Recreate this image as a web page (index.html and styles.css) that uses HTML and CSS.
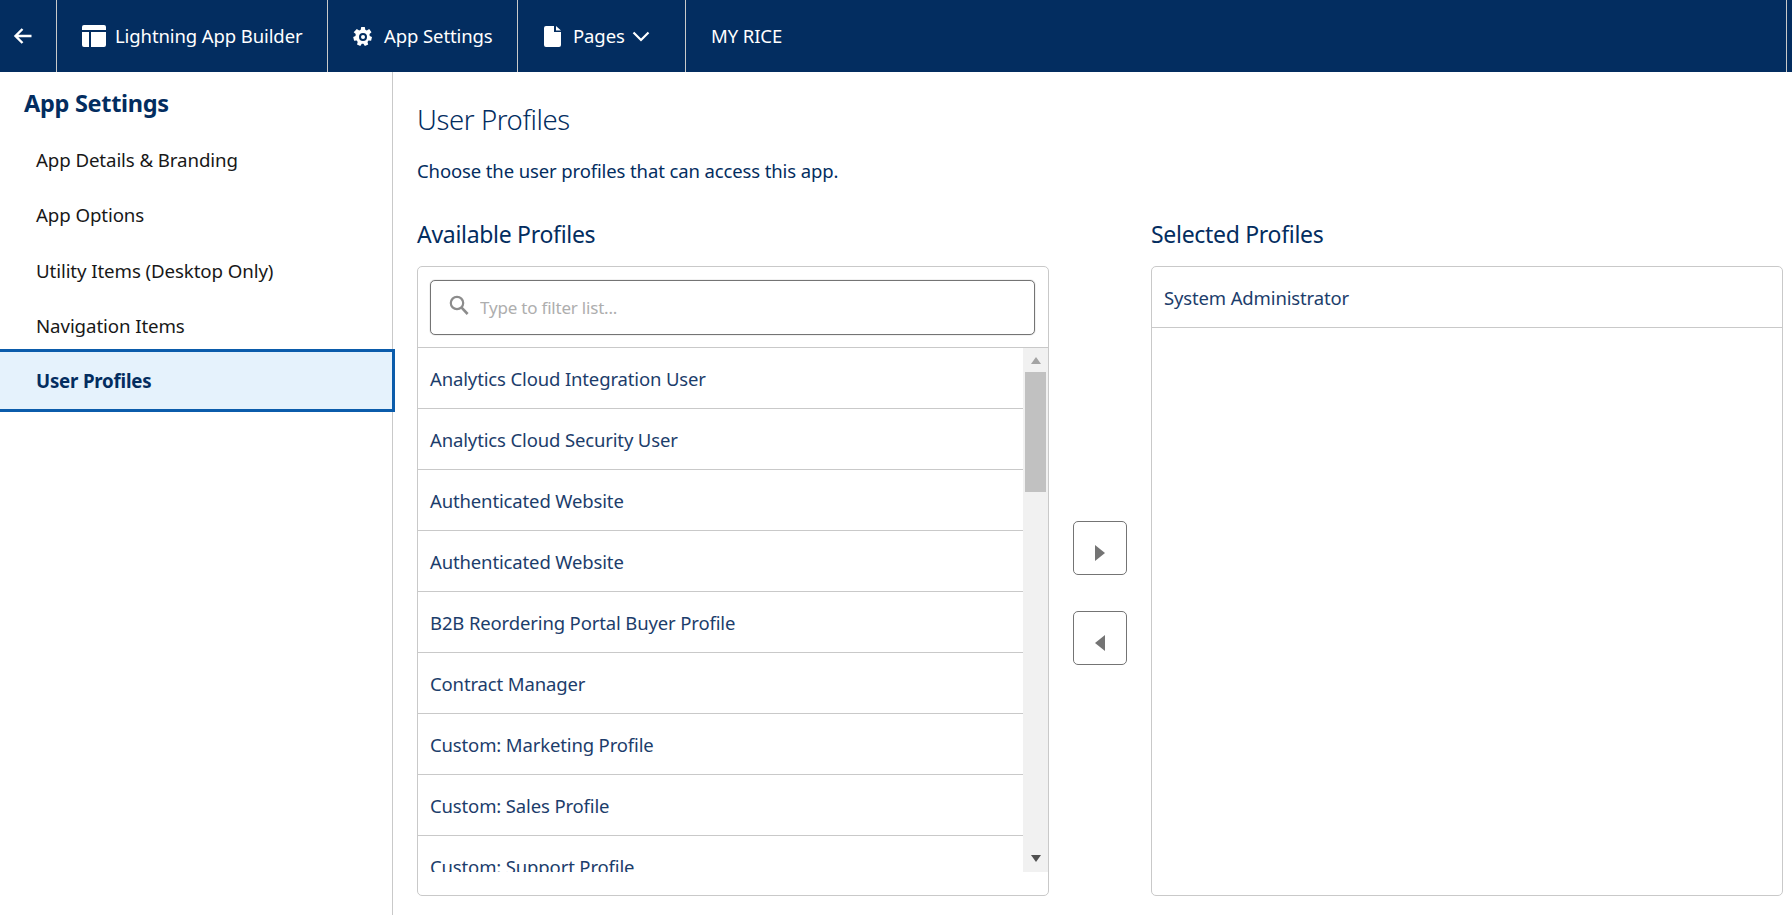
FILE: index.html
```html
<!DOCTYPE html>
<html lang="en">
<head>
  <meta charset="UTF-8" />
  <title>App Settings - User Profiles</title>
  <link rel="stylesheet" href="styles.css">
</head>
<body>
  <header class="topbar">
    <button class="back-btn" aria-label="Back">
      <svg width="20" height="18" viewBox="0 0 20 18"><path d="M18.5 9H2.5M9.5 2L2.5 9l7 7" fill="none" stroke="#fff" stroke-width="2.4"/></svg>
    </button>
    <div class="top-item top-builder">
      <svg width="24" height="22" viewBox="0 0 24 22"><path d="M2 0h20a2 2 0 0 1 2 2v3H0V2a2 2 0 0 1 2-2zM0 7h7v15H2a2 2 0 0 1-2-2zM9 7h15v13a2 2 0 0 1-2 2H9z" fill="#fff"/></svg>
      <span>Lightning App Builder</span>
    </div>
    <div class="top-item top-settings">
      <svg width="20" height="20" viewBox="0 0 20 20"><path fill="#fff" fill-rule="evenodd" d="M8.2 0h3.6l.5 2.7 1.5.7 2.4-1.4 2.3 3.2-2 1.8.2 1.9 2.3 1.2-.9 3.6-2.6-.1-1 1.3.7 2.6-3.3 1.4-1.5-2.1h-1.6l-1.5 2.1-3.3-1.4.7-2.6-1-1.3-2.6.1-.9-3.6 2.3-1.2.2-1.9-2-1.8L3.8 2l2.4 1.4 1.5-.7zM10 6a4 4 0 1 0 0 8 4 4 0 0 0 0-8z"/><circle cx="10" cy="10" r="2" fill="#fff"/></svg>
      <span>App Settings</span>
    </div>
    <div class="top-item top-pages">
      <svg width="17" height="21" viewBox="0 0 17 21"><path d="M2 0h8v6h7v13a2 2 0 0 1-2 2H2a2 2 0 0 1-2-2V2a2 2 0 0 1 2-2zM12 0l5 4.5h-5z" fill="#fff"/></svg>
      <span>Pages</span>
      <svg class="chevron" width="18" height="11" viewBox="0 0 18 11"><path d="M1.5 1.5L9 9l7.5-7.5" fill="none" stroke="#fff" stroke-width="2.2"/></svg>
    </div>
    <div class="top-item top-app"><span>MY RICE</span></div>
  </header>

  <div class="layout">
    <nav class="sidebar">
      <h2>App Settings</h2>
      <a class="nav-item">App Details &amp; Branding</a>
      <a class="nav-item">App Options</a>
      <a class="nav-item">Utility Items (Desktop Only)</a>
      <a class="nav-item">Navigation Items</a>
      <a class="nav-item active">User Profiles</a>
    </nav>

    <main class="content">
      <h1>User Profiles</h1>
      <p class="intro">Choose the user profiles that can access this app.</p>

      <div class="dual-list">
        <section class="col">
          <h3>Available Profiles</h3>
          <div class="box">
            <div class="filter-wrap">
              <label class="filter">
                <svg width="20" height="20" viewBox="0 0 20 20"><circle cx="8" cy="8" r="6.2" fill="none" stroke="#8c8c8c" stroke-width="2.2"/><path d="M12.6 12.6L18.6 19" stroke="#8c8c8c" stroke-width="2.6"/></svg>
                <input type="text" placeholder="Type to filter list...">
              </label>
            </div>
            <div class="scroll-area">
              <ul class="rows">
                <li>Analytics Cloud Integration User</li>
                <li>Analytics Cloud Security User</li>
                <li>Authenticated Website</li>
                <li>Authenticated Website</li>
                <li>B2B Reordering Portal Buyer Profile</li>
                <li>Contract Manager</li>
                <li>Custom: Marketing Profile</li>
                <li>Custom: Sales Profile</li>
                <li>Custom: Support Profile</li>
              </ul>
              <div class="scrollbar">
                <span class="arrow-up"></span>
                <span class="thumb"></span>
                <span class="arrow-down"></span>
              </div>
            </div>
          </div>
        </section>

        <div class="move-btns">
          <button class="move-btn" aria-label="Add"><svg width="10" height="16" viewBox="0 0 10 16"><path d="M0 0l10 8-10 8z" fill="#747474"/></svg></button>
          <button class="move-btn" aria-label="Remove"><svg width="10" height="16" viewBox="0 0 10 16"><path d="M10 0L0 8l10 8z" fill="#747474"/></svg></button>
        </div>

        <section class="col">
          <h3>Selected Profiles</h3>
          <div class="box">
            <ul class="rows selected">
              <li>System Administrator</li>
            </ul>
          </div>
        </section>
      </div>
    </main>
  </div>
</body>
</html>
```

FILE: styles.css
```css
* {
  box-sizing: border-box;
}
html, body {
  height: 100%;
}
body {
  margin: 0;
  font-family: "Noto Sans", "Open Sans", sans-serif;
  background: #fff;
  color: #032d60;
  overflow: hidden;
  display: flex;
  flex-direction: column;
}

/* top bar */
.topbar {
  height: 72px;
  flex: none;
  background: #032d60;
  color: #fff;
  display: flex;
  font-size: 18.5px;
  letter-spacing: -0.1px;
  padding-right: 5px;
}
.back-btn {
  width: 57px;
  background: none;
  border: 0;
  border-right: 1px solid #c9c9c9;
  display: flex;
  align-items: center;
  justify-content: flex-start;
  padding: 0 0 0 13px;
}
.top-item {
  display: flex;
  align-items: center;
  border-right: 1px solid #c9c9c9;
}
.top-item span {
  margin-top: -2px;
}
.top-builder { width: 271px; gap: 9px; padding-left: 25px; }
.top-settings { width: 190px; gap: 11px; padding-left: 25px; }
.top-settings svg { margin-top: 2px; }
.top-pages { width: 168px; gap: 12px; padding-left: 26px; }
.top-pages .chevron { margin-left: -5px; }
.top-app { flex: 1; padding-left: 25px; }

/* page */
.layout {
  flex: 1;
  display: flex;
  min-height: 0;
}
.sidebar {
  width: 393px;
  flex: none;
  border-right: 1px solid #c9c9c9;
  display: flex;
  flex-direction: column;
}
.sidebar h2 {
  margin: 0;
  padding: 15px 0 0 24px;
  height: 60px;
  font-size: 23.5px;
  line-height: 32px;
  font-weight: 700;
  letter-spacing: -0.3px;
  color: #032d60;
}
.nav-item {
  height: 55.3px;
  flex: none;
  padding-left: 36px;
  display: flex;
  align-items: center;
  font-size: 18.7px;
  letter-spacing: -0.1px;
  color: #181818;
}
.nav-item.active {
  height: 63px;
  margin-top: -4px;
  margin-right: -3px;
  background: #e5f2fc;
  border: 3px solid #0b5cab;
  border-left: 0;
  font-weight: 700;
  letter-spacing: -0.2px;
  color: #032d60;
}

.content {
  flex: 1;
  padding: 28px 9px 0 24px;
  min-width: 0;
}
.content h1 {
  margin: 0;
  font-size: 27.5px;
  line-height: 40px;
  font-weight: 300;
  letter-spacing: -0.4px;
  color: #032d60;
}
.intro {
  margin: 18px 0 0;
  font-size: 18.5px;
  line-height: 26px;
  letter-spacing: -0.12px;
  color: #032d60;
}

.dual-list {
  margin-top: 34px;
  display: grid;
  grid-template-columns: 632px 1fr 632px;
}
.col h3 {
  margin: 0 0 16px;
  height: 32px;
  font-size: 23px;
  line-height: 32px;
  font-weight: 400;
  letter-spacing: -0.3px;
  color: #032d60;
}
.box {
  height: 630px;
  border: 1px solid #c9c9c9;
  border-radius: 5px;
  background: #fff;
}

.filter-wrap {
  height: 81px;
  padding: 13px 13px 0 12px;
  border-bottom: 1px solid #c9c9c9;
}
.filter {
  height: 55px;
  border: 1px solid #747474;
  border-radius: 5px;
  box-shadow: 0 0 1px #747474;
  display: flex;
  align-items: center;
  padding-left: 18px;
  gap: 11px;
}
.filter svg {
  margin-top: -6px;
  flex: none;
}
.filter input {
  flex: 1;
  border: 0;
  outline: 0;
  background: none;
  font: inherit;
  font-size: 17px;
  letter-spacing: -0.2px;
  padding: 0;
}
.filter input::placeholder {
  color: #aeaeae;
  opacity: 1;
}

.scroll-area {
  height: 524px;
  display: flex;
  overflow: hidden;
}
.rows {
  list-style: none;
  margin: 0;
  padding: 0;
  flex: 1;
  min-width: 0;
  font-size: 18.5px;
  letter-spacing: -0.14px;
  color: #1c3d6b;
}
.rows li {
  height: 61px;
  padding-left: 12px;
  display: flex;
  align-items: center;
  border-bottom: 1px solid #c9c9c9;
}

.scrollbar {
  width: 25px;
  flex: none;
  background: #f1f1f1;
  display: flex;
  flex-direction: column;
  align-items: center;
}
.arrow-up, .arrow-down {
  width: 0;
  height: 0;
  border-left: 5.5px solid transparent;
  border-right: 5.5px solid transparent;
}
.arrow-up {
  margin-top: 9px;
  border-bottom: 7px solid #a3a3a3;
}
.thumb {
  width: 21px;
  height: 120px;
  margin-top: 8px;
  background: #c1c1c1;
}
.arrow-down {
  margin-top: auto;
  margin-bottom: 10px;
  border-top: 7px solid #505050;
}

.move-btns {
  display: flex;
  flex-direction: column;
  align-items: center;
  gap: 36px;
  padding-top: 303px;
}
.move-btn {
  width: 54px;
  height: 54px;
  background: #fff;
  border: 1px solid #747474;
  border-radius: 5px;
  padding: 10px 0 0;
  display: flex;
  align-items: center;
  justify-content: center;
}
```
